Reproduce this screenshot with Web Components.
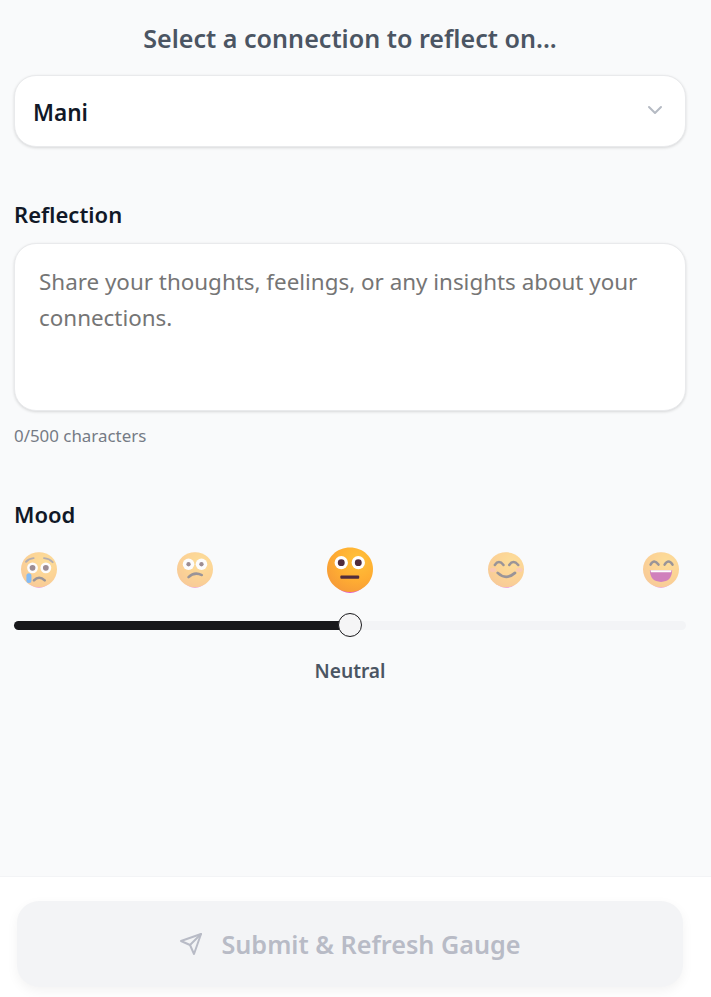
<!DOCTYPE html>
<html>
<head>
<meta charset="utf-8">
<title>Reflect</title>
<style>
  html, body { margin: 0; height: 100%; }
  body { background: #f9fafb; font-family: "Noto Sans", "Open Sans", sans-serif; }
</style>
</head>
<body>
<reflect-page>
  <connection-select slot="top" value="Mani">Select a connection to reflect on...</connection-select>
  <reflection-field slot="top" placeholder="Share your thoughts, feelings, or any insights about your connections."></reflection-field>
  <mood-slider slot="top"></mood-slider>
  <submit-bar slot="bottom">Submit &amp; Refresh Gauge</submit-bar>
</reflect-page>

<script>
class ReflectPage extends HTMLElement {
  constructor() {
    super();
    this.attachShadow({ mode: "open" });
    this.shadowRoot.innerHTML = `
      <style>
        :host { display: flex; flex-direction: column; height: 997px; overflow: hidden; }
        main { flex: 1; padding-left: 14px; display: flex; flex-direction: column; }
        footer { background: #fff; border-top: 1px solid #f3f4f6; height: 121px; box-sizing: border-box; }
      </style>
      <main><slot name="top"></slot></main>
      <footer><slot name="bottom"></slot></footer>`;
  }
}

class ConnectionSelect extends HTMLElement {
  constructor() {
    super();
    this.attachShadow({ mode: "open" });
  }
  connectedCallback() {
    this.shadowRoot.innerHTML = `
      <style>
        :host { display: block; width: 672px; padding-top: 20px; }
        h2 { margin: 0; font-size: 25.1px; line-height: 36px; font-weight: 600; color: #4b5563; text-align: center; }
        .box {
          margin-top: 19px; height: 72px; box-sizing: border-box; padding: 0 18px;
          display: flex; align-items: center; justify-content: space-between;
          background: #fff; border: 1px solid #e9eaec; border-radius: 22px;
          box-shadow: 0 1px 3px rgba(0,0,0,.14);
          font-size: 22.6px; font-weight: 600; color: #111827;
        }
        span { padding-top: 2px; }
        svg { width: 24px; height: 24px; margin-bottom: 2px; color: #b5bac3; }
      </style>
      <h2><slot></slot></h2>
      <div class="box">
        <span>${this.getAttribute("value")}</span>
        <svg viewBox="0 0 24 24" fill="none" stroke="currentColor" stroke-width="2" stroke-linecap="round" stroke-linejoin="round"><path d="m6 9 6 6 6-6"/></svg>
      </div>`;
  }
}

class ReflectionField extends HTMLElement {
  constructor() {
    super();
    this.attachShadow({ mode: "open" });
  }
  connectedCallback() {
    this.shadowRoot.innerHTML = `
      <style>
        :host { display: block; width: 672px; margin-top: 50px; }
        label { display: block; font-size: 22px; line-height: 34px; font-weight: 600; color: #111827; }
        .area {
          margin-top: 12px; height: 168px; box-sizing: border-box; padding: 20px 24px;
          background: #fff; border: 1px solid #e9eaec; border-radius: 22px;
          box-shadow: 0 1px 3px rgba(0,0,0,.14);
          font-size: 22.4px; line-height: 36px; color: #757575;
        }
        small { display: block; margin-top: 12px; font-size: 16.9px; line-height: 26px; color: #757b85; }
      </style>
      <label>Reflection</label>
      <div class="area">${this.getAttribute("placeholder")}</div>
      <small>0/500 characters</small>`;
  }
}

class MoodEmoji extends HTMLElement {
  constructor() {
    super();
    this.attachShadow({ mode: "open" });
  }
  connectedCallback() {
    const faces = {
      crying: `
        <path d="M14 27Q22 18 35 17M64 17Q78 18 88 28" fill="none" stroke="#6f6166" stroke-width="5.5" stroke-linecap="round"/>
        <circle cx="32" cy="44" r="15" fill="#fff"/><circle cx="69" cy="44" r="15" fill="#fff"/>
        <circle cx="32" cy="44" r="8" fill="#41202c"/><circle cx="69" cy="44" r="8" fill="#41202c"/>
        <path d="M36 79Q50 64 66 79" fill="none" stroke="#3d3138" stroke-width="7" stroke-linecap="round"/>
        <rect x="15" y="59" width="14" height="27" rx="7" fill="#0d7df2"/>`,
      sad: `
        <circle cx="32" cy="34" r="16" fill="#fff"/><circle cx="68" cy="34" r="16" fill="#fff"/>
        <circle cx="32" cy="34" r="6" fill="#41202c"/><circle cx="68" cy="34" r="6" fill="#41202c"/>
        <path d="M32 70Q48 54 69 64" fill="none" stroke="#3d3138" stroke-width="7" stroke-linecap="round"/>`,
      neutral: `
        <circle cx="31" cy="34" r="14.5" fill="#fff"/><circle cx="68" cy="34" r="14.5" fill="#fff"/>
        <circle cx="31" cy="34" r="7.5" fill="#512c3c"/><circle cx="68" cy="34" r="7.5" fill="#512c3c"/>
        <rect x="29" y="62" width="41" height="7" rx="2" fill="#512c3c"/>`,
      happy: `
        <ellipse cx="14" cy="50" rx="9" ry="6" fill="#f78a9a" opacity=".55"/><ellipse cx="87" cy="50" rx="9" ry="6" fill="#f78a9a" opacity=".55"/>
        <path d="M19 36Q30 20 43 36M59 36Q70 20 84 36" fill="none" stroke="#3d3138" stroke-width="7" stroke-linecap="round"/>
        <path d="M27 58Q50 80 75 58" fill="none" stroke="#3d3138" stroke-width="7.5" stroke-linecap="round"/>`,
      joy: `
        <path d="M21 35Q31 18 43 35M60 35Q71 18 82 35" fill="none" stroke="#3d3138" stroke-width="7" stroke-linecap="round"/>
        <path d="M19 51H81Q80 83 50 83Q20 83 19 51Z" fill="#a8087f"/>
        <path d="M21 51H79L78 56H22Z" fill="#fff"/>`
    };
    const id = this.getAttribute("face");
    this.shadowRoot.innerHTML = `
      <style>
        :host { display: flex; justify-content: center; align-items: center; width: 50px; height: 46px; }
        svg { display: block; width: 36px; height: 36px; opacity: .5; }
        :host([active]) svg { width: 46px; height: 46px; opacity: 1; }
      </style>
      <svg viewBox="0 0 100 100">
        <defs>
          <radialGradient id="f" cx=".66" cy=".28" r=".8">
            <stop offset="0" stop-color="#ffc23a"/><stop offset=".55" stop-color="#ffae32"/><stop offset="1" stop-color="#f69a38"/>
          </radialGradient>
        </defs>
        <ellipse cx="50" cy="51" rx="42" ry="49" fill="#e65cc4"/>
        <path d="M50 1C78 1 100 21 100 48C100 76 78 98 50 98C22 98 0 76 0 48C0 21 22 1 50 1Z" fill="url(#f)"/>
        ${faces[id]}
      </svg>`;
  }
}

class MoodSlider extends HTMLElement {
  constructor() {
    super();
    this.attachShadow({ mode: "open" });
    this.shadowRoot.innerHTML = `
      <style>
        :host { display: block; width: 672px; margin-top: 48px; }
        label { display: block; font-size: 22px; line-height: 34px; font-weight: 600; color: #111827; }
        .faces { display: flex; justify-content: space-between; margin-top: 16px; }
        .track { position: relative; margin-top: 28px; height: 9px; border-radius: 5px; background: #f3f4f6; }
        .fill { width: 50%; height: 100%; border-radius: 5px 0 0 5px; background: #18181b; }
        .thumb {
          position: absolute; left: 324px; top: -8px; width: 24px; height: 24px; box-sizing: border-box;
          border: 1.5px solid #18181b; border-radius: 50%; background: #f5f5f6;
        }
        .value { margin-top: 26px; text-align: center; font-size: 19.2px; line-height: 30px; font-weight: 600; color: #4b5563; }
      </style>
      <label>Mood</label>
      <div class="faces">
        <mood-emoji face="crying"></mood-emoji>
        <mood-emoji face="sad"></mood-emoji>
        <mood-emoji face="neutral" active></mood-emoji>
        <mood-emoji face="happy"></mood-emoji>
        <mood-emoji face="joy"></mood-emoji>
      </div>
      <div class="track"><div class="fill"></div><div class="thumb"></div></div>
      <div class="value">Neutral</div>`;
  }
}

class SubmitBar extends HTMLElement {
  constructor() {
    super();
    this.attachShadow({ mode: "open" });
    this.shadowRoot.innerHTML = `
      <style>
        :host { display: block; padding: 24px 28px 0 17px; }
        .btn {
          height: 86px; box-sizing: border-box; border-radius: 22px; background: #f3f4f6;
          box-shadow: 0 4px 12px rgba(0,0,0,.05);
          display: flex; align-items: center; justify-content: center; gap: 18px;
          font-size: 25.2px; font-weight: 600; color: #b8bbc6;
        }
        svg { width: 24px; height: 24px; }
      </style>
      <div class="btn">
        <svg viewBox="0 0 24 24" fill="none" stroke="currentColor" stroke-width="2" stroke-linecap="round" stroke-linejoin="round"><path d="M22 2 15 22 11 13 2 9z"/><path d="M22 2 11 13"/></svg>
        <span><slot></slot></span>
      </div>`;
  }
}

customElements.define("reflect-page", ReflectPage);
customElements.define("connection-select", ConnectionSelect);
customElements.define("reflection-field", ReflectionField);
customElements.define("mood-emoji", MoodEmoji);
customElements.define("mood-slider", MoodSlider);
customElements.define("submit-bar", SubmitBar);
</script>
</body>
</html>
